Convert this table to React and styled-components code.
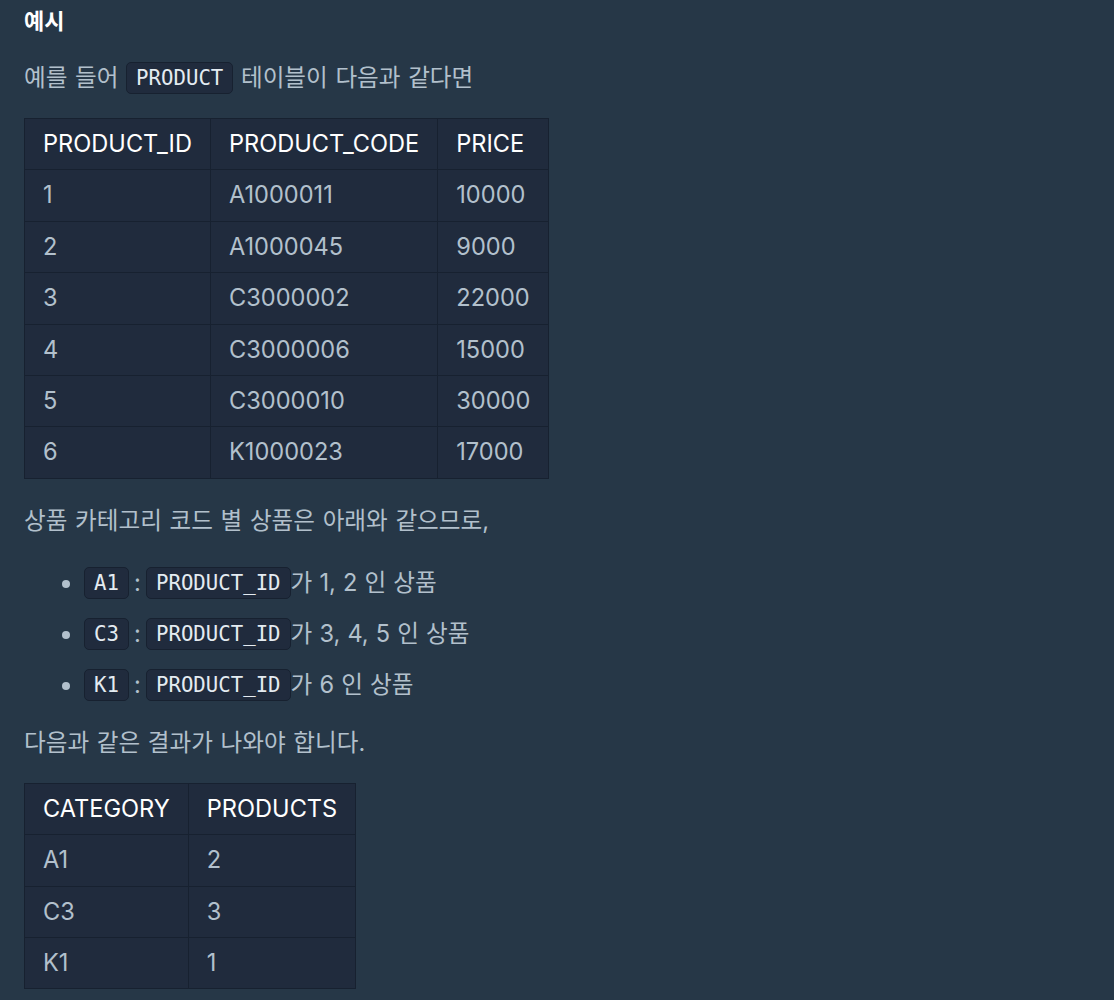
import styled, { createGlobalStyle } from "styled-components";

const GlobalStyle = createGlobalStyle`
  html, body {
    margin: 0;
    padding: 0;
    background: #263747;
  }
`;

const productRows = [
  ["1", "A1000011", "10000"],
  ["2", "A1000045", "9000"],
  ["3", "C3000002", "22000"],
  ["4", "C3000006", "15000"],
  ["5", "C3000010", "30000"],
  ["6", "K1000023", "17000"],
];

const resultRows = [
  ["A1", "2"],
  ["C3", "3"],
  ["K1", "1"],
];

const categories = [
  { code: "A1", ids: "1, 2" },
  { code: "C3", ids: "3, 4, 5" },
  { code: "K1", ids: "6" },
];

const Page = styled.div`
  min-height: 1000px;
  padding: 4px 24px 0;
  box-sizing: border-box;
  background: #263747;
  color: #b2c0cc;
  font-family: Inter, "Noto Sans CJK KR", sans-serif;
  font-size: 23.6px;
  line-height: 35px;
`;

const Heading = styled.h5`
  margin: 0 0 21px;
  font-size: 22px;
  font-weight: 600;
  color: #ffffff;
  line-height: 35px;
`;

const Paragraph = styled.p`
  margin: 0 0 ${({ $tight }) => ($tight ? "0" : "23px")};
  word-spacing: 1px;
`;

const Code = styled.code`
  display: inline-block;
  padding: 0 9px;
  font-family: "DejaVu Sans Mono", monospace;
  font-size: 20.7px;
  line-height: 30px;
  word-spacing: 0;
  color: #e4ebf1;
  background: #202b3d;
  border: 1px solid #172130;
  border-radius: 5px;
  vertical-align: 1px;
`;

const Table = styled.table`
  border-collapse: collapse;
  margin: 0 0 24px;
  background: #202b3d;
`;

const HeadCell = styled.th`
  padding: 12px 18px;
  text-align: left;
  font-weight: 400;
  color: #ffffff;
  line-height: 26.4px;
  border: 1px solid #172130;
`;

const Cell = styled.td`
  padding: 12px 18px;
  line-height: 26.4px;
  border: 1px solid #172130;
`;

const List = styled.ul`
  margin: 27px 0 23px;
  padding-left: 60px;
`;

const Item = styled.li`
  margin-bottom: 16px;
  &:last-child {
    margin-bottom: 0;
  }
`;

const Colon = styled.span`
  word-spacing: -1.5px;
`;

const Rest = styled.span`
  word-spacing: 0.5px;
`;

function App() {
  return (
    <Page>
      <GlobalStyle />
      <Heading>예시</Heading>
      <Paragraph>
        예를 들어 <Code>PRODUCT</Code> 테이블이 다음과 같다면
      </Paragraph>
      <Table>
        <thead>
          <tr>
            <HeadCell>PRODUCT_ID</HeadCell>
            <HeadCell>PRODUCT_CODE</HeadCell>
            <HeadCell>PRICE</HeadCell>
          </tr>
        </thead>
        <tbody>
          {productRows.map((r) => (
            <tr key={r[0]}>
              {r.map((v) => (
                <Cell key={v}>{v}</Cell>
              ))}
            </tr>
          ))}
        </tbody>
      </Table>
      <Paragraph $tight>상품 카테고리 코드 별 상품은 아래와 같으므로,</Paragraph>
      <List>
        {categories.map((c) => (
          <Item key={c.code}>
            <Code>{c.code}</Code>
            <Colon> : </Colon>
            <Code>PRODUCT_ID</Code>
            <Rest>가 {c.ids} 인 상품</Rest>
          </Item>
        ))}
      </List>
      <Paragraph>다음과 같은 결과가 나와야 합니다.</Paragraph>
      <Table>
        <thead>
          <tr>
            <HeadCell>CATEGORY</HeadCell>
            <HeadCell>PRODUCTS</HeadCell>
          </tr>
        </thead>
        <tbody>
          {resultRows.map((r) => (
            <tr key={r[0]}>
              <Cell>{r[0]}</Cell>
              <Cell>{r[1]}</Cell>
            </tr>
          ))}
        </tbody>
      </Table>
    </Page>
  );
}

export default App;
